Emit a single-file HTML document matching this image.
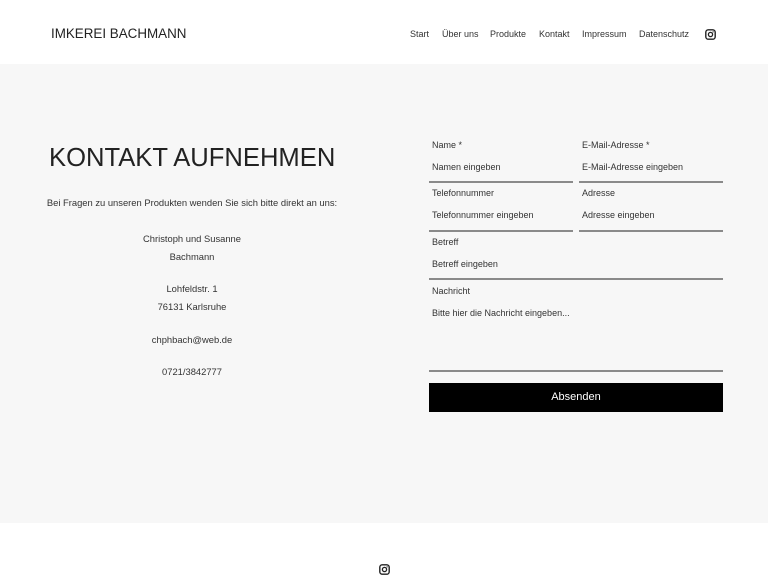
<!DOCTYPE html>
<html><head><meta charset="utf-8"><style>
*{margin:0;padding:0;box-sizing:border-box}
body{width:768px;height:576px;overflow:hidden;background:#fff;font-family:"Liberation Sans",sans-serif;color:#222;position:relative}
.a{position:absolute;white-space:nowrap}
.nav{font-size:9px;color:#333;top:29px}
.gray{position:absolute;left:0;top:64px;width:768px;height:459px;background:#f7f7f7}
.lbl{font-size:9px;color:#333}
.ph{font-size:9px;color:#333}
.ln{position:absolute;height:2px;background:#8a8a8a}
.c{font-size:9.4px;color:#333;text-align:center;width:300px;left:42px}
</style></head><body>
<div class="a" style="left:51px;top:26px;font-size:13.4px;color:#222">IMKEREI BACHMANN</div>
<div class="a nav" style="left:410px">Start</div>
<div class="a nav" style="left:442px">Über uns</div>
<div class="a nav" style="left:490px">Produkte</div>
<div class="a nav" style="left:539px">Kontakt</div>
<div class="a nav" style="left:582px">Impressum</div>
<div class="a nav" style="left:639px">Datenschutz</div>
<svg class="a" style="left:705px;top:29px" width="11" height="11" viewBox="0 0 11 11"><rect x=".8" y=".8" width="9.4" height="9.4" rx="2.5" fill="none" stroke="#222" stroke-width="1.4"/><circle cx="5.5" cy="5.5" r="2.1" fill="none" stroke="#222" stroke-width="1.3"/><circle cx="8.1" cy="2.9" r=".6" fill="#222"/></svg>
<div class="gray"></div>
<div class="a" style="left:49px;top:144px;font-size:25.6px;color:#222">KONTAKT AUFNEHMEN</div>
<div class="a c" style="top:197px">Bei Fragen zu unseren Produkten wenden Sie sich bitte direkt an uns:</div>
<div class="a c" style="top:233px">Christoph und Susanne</div>
<div class="a c" style="top:251px">Bachmann</div>
<div class="a c" style="top:283px">Lohfeldstr. 1</div>
<div class="a c" style="top:301px">76131 Karlsruhe</div>
<div class="a c" style="top:334px">chphbach@web.de</div>
<div class="a c" style="top:366px">0721/3842777</div>
<div class="a lbl" style="left:432px;top:140px">Name *</div>
<div class="a ph" style="left:432px;top:162px">Namen eingeben</div>
<div class="a lbl" style="left:582px;top:140px">E-Mail-Adresse *</div>
<div class="a ph" style="left:582px;top:162px">E-Mail-Adresse eingeben</div>
<div class="ln" style="left:429px;top:181px;width:144px"></div>
<div class="ln" style="left:579px;top:181px;width:144px"></div>
<div class="a lbl" style="left:432px;top:188px">Telefonnummer</div>
<div class="a ph" style="left:432px;top:210px">Telefonnummer eingeben</div>
<div class="a lbl" style="left:582px;top:188px">Adresse</div>
<div class="a ph" style="left:582px;top:210px">Adresse eingeben</div>
<div class="ln" style="left:429px;top:230px;width:144px"></div>
<div class="ln" style="left:579px;top:230px;width:144px"></div>
<div class="a lbl" style="left:432px;top:237px">Betreff</div>
<div class="a ph" style="left:432px;top:259px">Betreff eingeben</div>
<div class="ln" style="left:429px;top:278px;width:294px"></div>
<div class="a lbl" style="left:432px;top:286px">Nachricht</div>
<div class="a ph" style="left:432px;top:308px">Bitte hier die Nachricht eingeben...</div>
<div class="ln" style="left:429px;top:370px;width:294px"></div>
<div class="a" style="left:429px;top:383px;width:294px;height:29px;background:#000;color:#fff;font-size:11px;text-align:center;line-height:29px">Absenden</div>
<svg class="a" style="left:379px;top:564px" width="11" height="11" viewBox="0 0 11 11"><rect x=".8" y=".8" width="9.4" height="9.4" rx="2.5" fill="none" stroke="#222" stroke-width="1.4"/><circle cx="5.5" cy="5.5" r="2.1" fill="none" stroke="#222" stroke-width="1.3"/><circle cx="8.1" cy="2.9" r=".6" fill="#222"/></svg>
</body></html>
